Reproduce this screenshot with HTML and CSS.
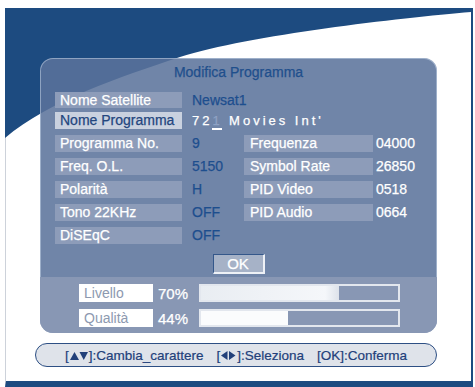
FILE: index.html
```html
<!DOCTYPE html>
<html>
<head>
<meta charset="utf-8">
<link rel="stylesheet" href="styles.css">
</head>
<body>
<div class="frame">
  <svg class="wave" viewBox="0 0 466 373" width="466" height="373" aria-hidden="true">
    <path d="M0,0 L466,0 L466,4 C395,10 245,27 175,49 C115,69 45,92 0,130 Z" fill="#1d4b80"/>
  </svg>
  <div class="panel">
    <div class="title">Modifica Programma</div>
    <div class="grid">
      <div class="lab first">Nome Satellite</div>
      <div class="val first wide">Newsat1</div>

      <div class="lab sel">Nome Programma</div>
      <div class="val wide name">72<span class="cur">1</span> Movies Int'</div>

      <div class="lab">Programma No.</div>
      <div class="val">9</div>
      <div class="lab rlab">Frequenza</div>
      <div class="rval">04000</div>

      <div class="lab">Freq. O.L.</div>
      <div class="val">5150</div>
      <div class="lab rlab">Symbol Rate</div>
      <div class="rval">26850</div>

      <div class="lab">Polarità</div>
      <div class="val">H</div>
      <div class="lab rlab">PID Video</div>
      <div class="rval">0518</div>

      <div class="lab">Tono 22KHz</div>
      <div class="val">OFF</div>
      <div class="lab rlab">PID Audio</div>
      <div class="rval">0664</div>

      <div class="lab">DiSEqC</div>
      <div class="val">OFF</div>
    </div>
    <div class="okrow"><div class="ok">OK</div></div>
    <div class="lower">
      <div class="meter">
        <div class="mlab">Livello</div>
        <div class="pct">70%</div>
        <div class="bar"><div class="fill f1" style="width:70%"></div></div>
      </div>
      <div class="meter">
        <div class="mlab">Qualità</div>
        <div class="pct">44%</div>
        <div class="bar"><div class="fill" style="width:44%"></div></div>
      </div>
    </div>
  </div>
  <div class="help">
    <span class="grp">[<svg class="tri" viewBox="0 0 18 8" width="18" height="8"><path d="M0,8 L4.5,0 L9,8 Z M9.5,0 L18,0 L13.75,8 Z" fill="#22407a"/></svg>]:Cambia_carattere</span>
    <span class="grp">[<svg class="tri" viewBox="0 0 15 9" width="15" height="9"><path d="M6.5,0 L6.5,9 L0,4.5 Z M8,0 L14.5,4.5 L8,9 Z" fill="#22407a"/></svg>]:Seleziona</span>
    <span class="grp">[OK]:Conferma</span>
  </div>
</div>
</body>
</html>
```

FILE: styles.css
```css
html, body {
  margin: 0;
  padding: 0;
}
body {
  width: 475px;
  height: 387px;
  overflow: hidden;
  background: #ffffff;
  font-family: "Liberation Sans", Arial, sans-serif;
}
.frame {
  position: relative;
  margin: 8px 0 0 5px;
  width: 468px;
  height: 379px;
  box-sizing: border-box;
  border-left: 1px solid #cdd2da;
  border-right: 2px solid #1d4b80;
  border-bottom: 6px solid #1d4b80;
  padding-top: 50px;
}
.wave {
  position: absolute;
  top: 0;
  left: -1px;
  display: block;
}
.panel {
  position: relative;
  margin-left: 34px;
  width: 397px;
  height: 275px;
  box-sizing: border-box;
  border-radius: 13px;
  background: rgba(91, 115, 155, 0.87);
  box-shadow: inset 0 0 0 1px rgba(215, 228, 245, 0.45);
  padding-top: 4px;
  overflow: hidden;
  -webkit-text-stroke: 0.25px currentColor;
}
.title {
  text-align: center;
  font-size: 14px;
  line-height: 20px;
  color: #1f4f8c;
  margin-bottom: 10px;
}
.grid {
  display: grid;
  grid-template-columns: 127px 62px 129px 1fr;
  grid-template-rows: 14px repeat(6, 17px);
  row-gap: 6px;
  padding-left: 15px;
  font-size: 14px;
}
.lab {
  align-self: start;
  height: 17px;
  line-height: 17px;
  padding-left: 5px;
  background: #8d9cb9;
  color: #ffffff;
  white-space: nowrap;
}
.lab.first {
  height: 16px;
  line-height: 16px;
}
.lab.sel {
  background: #c9d1df;
  color: #23467e;
}
.rlab {
  padding-left: 6px;
}
.val {
  align-self: start;
  line-height: 17px;
  padding-left: 10px;
  color: #1d4e8e;
  white-space: nowrap;
}
.val.first {
  line-height: 16px;
}
.wide {
  grid-column: 2 / 5;
}
.name {
  color: #ffffff;
  font-size: 13px;
  letter-spacing: 3px;
}
.cur {
  display: inline-block;
  width: 10px;
  line-height: 14px;
  border-bottom: 2px solid #ffffff;
  color: #8fa2c4;
  letter-spacing: 0;
}
.rval {
  align-self: start;
  line-height: 17px;
  padding-left: 3px;
  color: #ffffff;
}
.okrow {
  margin-top: 10px;
  display: flex;
  justify-content: center;
}
.ok {
  width: 52px;
  height: 20px;
  box-sizing: border-box;
  border-top: 1px solid #34578a;
  border-left: 1px solid #34578a;
  border-right: 2px solid #eef1f6;
  border-bottom: 2px solid #eef1f6;
  background: #a6b2c7;
  color: #ffffff;
  font-size: 15px;
  line-height: 17px;
  text-align: center;
}
.lower {
  margin-top: 3px;
  height: 56px;
  box-sizing: border-box;
  background: #8897b4;
  padding: 7px 0 0 39px;
  display: flex;
  flex-direction: column;
  gap: 7px;
}
.meter {
  display: flex;
  align-items: center;
  height: 18px;
}
.mlab {
  width: 74px;
  height: 18px;
  box-sizing: border-box;
  padding-left: 5px;
  background: #ffffff;
  color: #8d99b0;
  font-size: 14px;
  line-height: 18px;
  -webkit-text-stroke: 0;
}
.pct {
  width: 46px;
  box-sizing: border-box;
  padding-left: 5px;
  color: #ffffff;
  font-size: 15px;
}
.bar {
  width: 201px;
  height: 18px;
  box-sizing: border-box;
  border: 2px solid #e3e7ee;
  background: #8897b4;
}
.fill {
  height: 100%;
  background: #fbfcfd;
}
.fill.f1 {
  background: linear-gradient(to right, #e9edf2, #f5f7fa 90%, #dde2ea);
}
.help {
  margin: 10px 0 0 29px;
  width: 402px;
  height: 24px;
  box-sizing: border-box;
  border: 1.5px solid #2d4f84;
  border-radius: 12px;
  background: #dfe3ea;
  display: flex;
  justify-content: center;
  align-items: center;
  gap: 13px;
  color: #22407a;
  font-size: 13.5px;
  white-space: nowrap;
  -webkit-text-stroke: 0.2px currentColor;
}
.tri {
  display: inline-block;
  vertical-align: 0px;
  margin: 0 1px;
}
```
